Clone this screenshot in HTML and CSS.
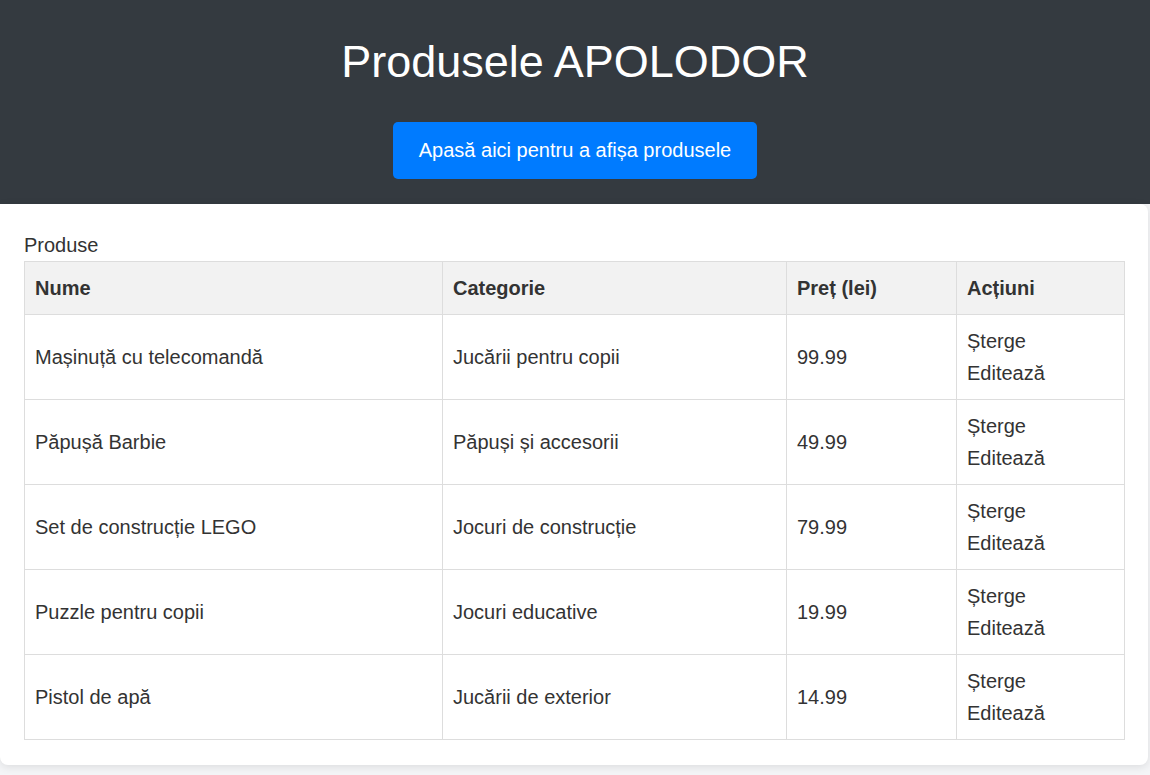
FILE: index.html
```html
<!DOCTYPE html>
<html lang="ro">
<head>
<meta charset="utf-8">
<title>Produsele APOLODOR</title>
<link rel="stylesheet" href="styles.css">
</head>
<body>
<header class="hero">
  <h1 class="hero-title">Produsele APOLODOR</h1>
  <button class="btn-primary" type="button">Apasă aici pentru a afișa produsele</button>
</header>
<main class="card">
  <table class="products">
    <caption class="products-caption">Produse</caption>
    <colgroup>
      <col class="col-name">
      <col class="col-cat">
      <col class="col-price">
      <col class="col-actions">
    </colgroup>
    <thead>
      <tr><th>Nume</th><th>Categorie</th><th>Preț (lei)</th><th>Acțiuni</th></tr>
    </thead>
    <tbody>
      <tr><td>Mașinuță cu telecomandă</td><td>Jucării pentru copii</td><td>99.99</td><td><div>Șterge</div><div>Editează</div></td></tr>
      <tr><td>Păpușă Barbie</td><td>Păpuși și accesorii</td><td>49.99</td><td><div>Șterge</div><div>Editează</div></td></tr>
      <tr><td>Set de construcție LEGO</td><td>Jocuri de construcție</td><td>79.99</td><td><div>Șterge</div><div>Editează</div></td></tr>
      <tr><td>Puzzle pentru copii</td><td>Jocuri educative</td><td>19.99</td><td><div>Șterge</div><div>Editează</div></td></tr>
      <tr><td>Pistol de apă</td><td>Jucării de exterior</td><td>14.99</td><td><div>Șterge</div><div>Editează</div></td></tr>
    </tbody>
  </table>
</main>
</body>
</html>
```
FILE: styles.css
```css
html, body {
  margin: 0;
  padding: 0;
}
body {
  background: #f4f5f7;
  font-family: "Liberation Sans", Arial, sans-serif;
  font-size: 20px;
  line-height: 32px;
  color: #333;
}
.hero {
  background: #343a40;
  color: #fff;
  text-align: center;
  padding: 36px 0 25px;
}
.hero-title {
  margin: 0 0 34px;
  font-size: 45px;
  font-weight: normal;
  line-height: 1.15;
}
.btn-primary {
  background: #007bff;
  color: #fff;
  border: none;
  border-radius: 5px;
  font-family: inherit;
  font-size: 20px;
  line-height: 25px;
  padding: 16px 26px;
  cursor: pointer;
}
.card {
  display: block;
  background: #fff;
  margin: 0 2px 10px 0;
  padding: 25px 24px 25px;
  border-radius: 0 8px 8px 8px;
  box-shadow: 0 2px 8px rgba(0, 0, 0, 0.1);
}
.products {
  width: 100%;
  border-collapse: collapse;
  table-layout: fixed;
}
.products-caption {
  text-align: left;
  caption-side: top;
  line-height: 32px;
}
.col-name { width: 418px; }
.col-cat { width: 344px; }
.col-price { width: 170px; }
.col-actions { width: 168px; }
.products th,
.products td {
  border: 1px solid #ddd;
  padding: 10px;
  text-align: left;
  vertical-align: middle;
}
.products th {
  background: #f2f2f2;
  font-weight: bold;
}
```
